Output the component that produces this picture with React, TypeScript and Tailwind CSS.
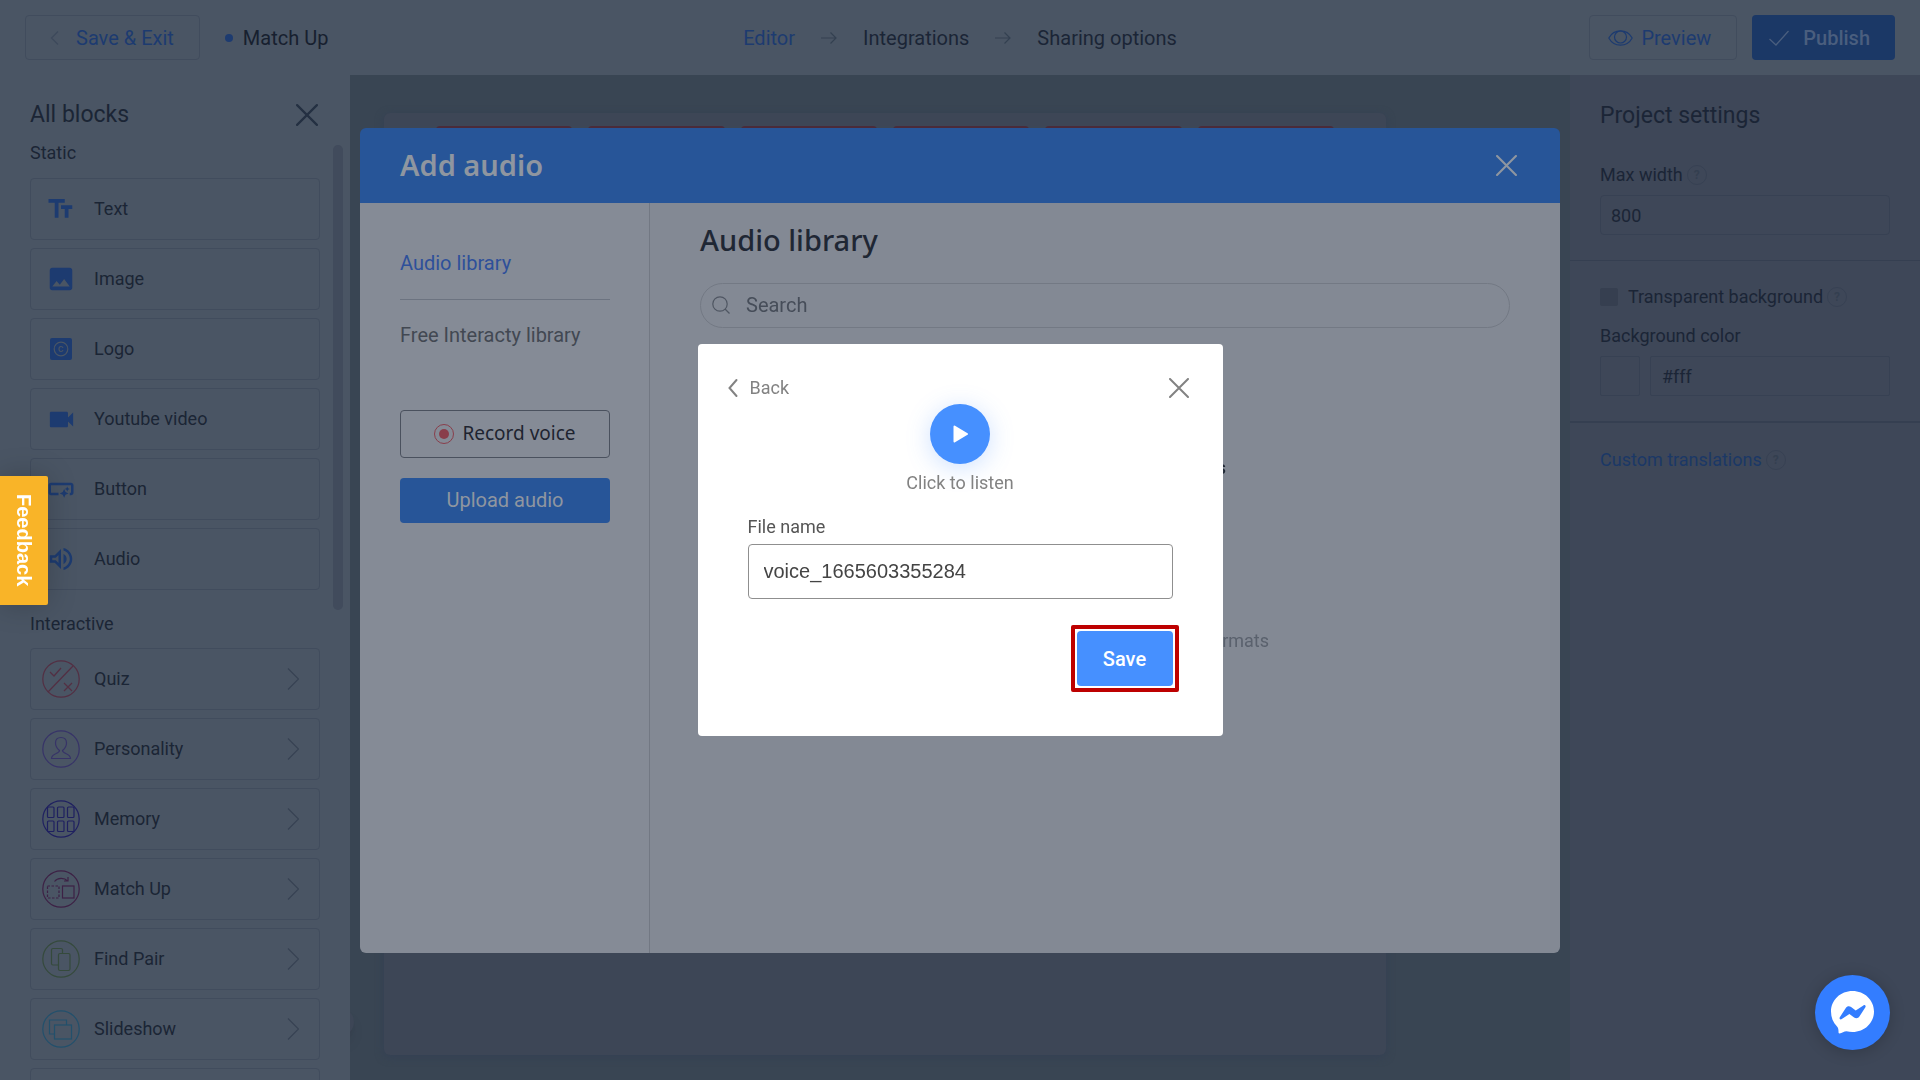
import React, { useState } from 'react';
import { MdFormatSize, MdImage, MdOutlineSmartButton, MdOutlineVolumeUp, MdVideocam } from 'react-icons/md';

const CloseIcon = ({ size = 20, width = 2 }: { size?: number; width?: number }) => (
    <svg width={size} height={size} viewBox="0 0 20 20" fill="none" stroke="currentColor" strokeWidth={width} strokeLinecap="round">
        <path d="M1 1l18 18M19 1L1 19" />
    </svg>
);

const ArrowRight = () => (
    <svg width="16" height="16" viewBox="0 0 16 16" fill="none" stroke="#344151" strokeWidth="1.2">
        <path d="M0 8h15M9.5 2.5L15 8l-5.5 5.5" />
    </svg>
);

const ChevronRight = () => (
    <svg width="12" height="22" viewBox="0 0 12 22" fill="none" stroke="#374253" strokeWidth="1.2">
        <path d="M1 0.5L11.5 11 1 21.5" />
    </svg>
);

const LogoIcon = () => (
    <svg width="22" height="22" viewBox="0 0 22 22" fill="none">
        <rect width="22" height="22" rx="2" fill="currentColor" />
        <circle cx="11" cy="11" r="6.8" stroke="#4a5564" strokeWidth="1.2" />
        <path d="M13 10c-.2-.9-1-1.500-2-1.500-1.300 0-2 1-2 2.500s.7 2.500 2 2.500c1 0 1.800-.6 2-1.500" stroke="#4a5564" strokeWidth="1.1" />
    </svg>
);

const staticBlocks = [
    { name: 'Text', icon: <MdFormatSize size={30} className="-scale-x-100" /> },
    { name: 'Image', icon: <MdImage size={30} /> },
    { name: 'Logo', icon: <LogoIcon /> },
    { name: 'Youtube video', icon: <MdVideocam size={31} /> },
    { name: 'Button', icon: <MdOutlineSmartButton size={30} /> },
    { name: 'Audio', icon: <MdOutlineVolumeUp size={30} /> },
];

const interactiveBlocks = [
    {
        name: 'Quiz',
        color: 'text-[#532f43]',
        icon: <path d="M6 32L31 6M8 12l4 4 7-8M22 23l8 8M30 23l-8 8" />,
    },
    {
        name: 'Personality',
        color: 'text-[#373368]',
        icon: <path d="M17.5 20.500C15 18.500 13.500 16 13.500 13c0-3.500 2-5.500 5.500-5.500s5.500 2 5.500 5.500c0 3-1.500 5.500-4 7.500 0 3.500 8 2.500 8 8h-19c0-5.500 8-4.500 8-8z" />,
    },
    {
        name: 'Memory',
        color: 'text-[#1f2060]',
        icon: (
            <>
                <rect x="5.5" y="7" width="6.5" height="10.5" rx="1" />
                <rect x="15.5" y="7" width="6.5" height="10.5" rx="1" />
                <rect x="25.5" y="7" width="6.5" height="10.5" rx="1" />
                <rect x="5.5" y="21" width="6.5" height="10.5" rx="1" />
                <rect x="15.5" y="21" width="6.5" height="10.5" rx="1" />
                <rect x="25.5" y="21" width="6.5" height="10.5" rx="1" />
            </>
        ),
    },
    {
        name: 'Match Up',
        color: 'text-[#3d2145]',
        icon: (
            <>
                <rect x="5.5" y="16" width="11.5" height="12" strokeDasharray="2.5 1.5" />
                <rect x="20.5" y="16" width="11.5" height="12" />
                <path d="M12.5 11.500c3-4 10-4 13-.5M26 7v4h-4" />
            </>
        ),
    },
    {
        name: 'Find Pair',
        color: 'text-[#354a3c]',
        icon: (
            <>
                <path d="M16.500 25H11c-1 0-1.500-.5-1.500-1.500V10c0-1 .5-1.500 1.500-1.500h8c1 0 1.500.5 1.500 1.500v3.500" />
                <rect x="16.500" y="13.5" width="11.5" height="17" rx="1.5" />
            </>
        ),
    },
    {
        name: 'Slideshow',
        color: 'text-[#22506c]',
        icon: (
            <>
                <path d="M12.500 24H7.500V10h17v5" />
                <rect x="12.5" y="15" width="17" height="14" />
            </>
        ),
    },
];

const Help = () => (
    <span className="flex h-5 w-5 items-center justify-center rounded-full border border-[#374153] text-xs font-bold text-[#343f50]">?</span>
);

const Header = () => (
    <header className="flex h-[75px] shrink-0 items-center bg-[#4a5564] px-[25px] text-xl text-[#17202f]">
        <div className="flex flex-1 items-center">
            <button className="flex h-[45px] items-center gap-[17px] rounded border border-[#414c5d] pr-[25px] pl-6 text-[#1d3b70]">
                <svg width="9" height="14" viewBox="0 0 9 14" fill="none" stroke="#3d495b" strokeWidth="1.2">
                    <path d="M8 .5L1.5 7 8 13.5" />
                </svg>
                Save &amp; Exit
            </button>
            <span className="mr-2.5 ml-[25px] h-2 w-2 rounded-full bg-[#1d3b70]" />
            <h1>Match Up</h1>
        </div>
        <nav className="flex items-center gap-[26px] text-[#1b2536]">
            <a href="#editor" className="text-[#1d3b70]">Editor</a>
            <ArrowRight />
            <a href="#integrations">Integrations</a>
            <ArrowRight />
            <a href="#sharing">Sharing options</a>
        </nav>
        <div className="flex flex-1 justify-end gap-[15px]">
            <button className="flex h-[45px] items-center gap-2 rounded border border-[#414c5d] pr-[25px] pl-[18px] text-[#1d3b70]">
                <svg width="25" height="18" viewBox="0 0 25 18" fill="none" stroke="currentColor" strokeWidth="1.2">
                    <path d="M.8 9C6-.5 19-.5 24.200 9 19 18.500 6 18.500.8 9z" />
                    <circle cx="12.5" cy="8" r="6" />
                </svg>
                Preview
            </button>
            <button className="flex h-[45px] items-center gap-[14px] rounded bg-[#1b3866] pr-[25px] pl-[17px] font-medium text-[#4a5e7e]">
                <svg width="20" height="16" viewBox="0 0 20 16" fill="none" stroke="currentColor" strokeWidth="1.3">
                    <path d="M.5 9L7 15 19.500 1" />
                </svg>
                Publish
            </button>
        </div>
    </header>
);

const Sidebar = () => (
    <aside className="relative z-10 flex w-[350px] shrink-0 flex-col bg-[#4a5564] pt-6 text-lg text-[#1b2535]">
        <div className="flex h-8 shrink-0 items-center justify-between pr-8 pl-[30px]">
            <h2 className="text-[23px]">All blocks</h2>
            <button aria-label="Close blocks" className="text-[#243042]">
                <CloseIcon size={22} />
            </button>
        </div>
        <div className="mt-2.5 flex min-h-0 flex-1 pr-[7px] pl-[30px]">
            <div className="flex-1 overflow-hidden">
                <h3 className="h-[37px] leading-6">Static</h3>
                <ul className="flex flex-col gap-2">
                    {staticBlocks.map((b) => (
                        <li key={b.name}>
                            <button className="flex h-[62px] w-full items-center gap-[17px] rounded border border-[#414c5d] pl-[14px]">
                                <span className="flex w-8 justify-center text-[#1d3b70]">{b.icon}</span>
                                {b.name}
                            </button>
                        </li>
                    ))}
                </ul>
                <h3 className="flex h-[58px] items-center pt-2.5">Interactive</h3>
                <ul className="flex flex-col gap-2">
                    {interactiveBlocks.map((b) => (
                        <li key={b.name}>
                            <button className="flex h-[62px] w-full items-center gap-[14px] rounded border border-[#414c5d] pr-5 pl-[11px]">
                                <svg width="38" height="38" viewBox="0 0 38 38" fill="none" stroke="currentColor" strokeWidth="1.2" className={b.color}>
                                    <circle cx="19" cy="19" r="18.2" />
                                    {b.icon}
                                </svg>
                                {b.name}
                                <span className="ml-auto"><ChevronRight /></span>
                            </button>
                        </li>
                    ))}
                    <li className="h-[62px] rounded border border-[#414c5d]" />
                </ul>
            </div>
            <div className="mt-1 ml-[13px] h-[465px] w-2.5 rounded-full bg-[#414b5c]" />
        </div>
    </aside>
);

const Canvas = () => (
    <main className="relative flex min-w-0 flex-1 bg-[#394553] pt-[38px] pr-[25px] pb-[25px] pl-[34px]">
        <div className="absolute bottom-11 -left-6 h-7 w-7 rounded-full bg-[#3d4656] shadow-lg" />
        <div className="flex w-full max-w-[1002px] items-start gap-4 rounded-md bg-[#3d4656] px-[52px] pt-[13px] shadow-[0_2px_8px_#344054]">
            {[1, 2, 3, 4, 5, 6].map((n) => (
                <div key={n} className="h-40 flex-1 rounded bg-[#4a2b3a]" />
            ))}
        </div>
    </main>
);

const Settings = () => (
    <aside className="flex w-[350px] shrink-0 flex-col bg-[#3e4758] pt-[25px] text-lg text-[#1b2536]">
        <h2 className="mx-[30px] text-[23px] leading-8">Project settings</h2>
        <div className="border-b border-[#353f51] px-[30px] pt-[31px] pb-[25px]">
            <div className="flex h-6 items-center gap-1">
                <label htmlFor="max-width">Max width</label>
                <Help />
            </div>
            <input id="max-width" defaultValue="800" className="mt-2 h-10 w-full rounded border border-[#374153] px-2.5 outline-none" />
        </div>
        <div className="border-b-2 border-[#353f51] px-[30px] pt-6 pb-[25px]">
            <div className="flex h-6 items-center gap-1">
                <input id="transparent" type="checkbox" className="mr-1.5 h-[18px] w-[18px] appearance-none rounded-xs bg-[#363f50]" />
                <label htmlFor="transparent">Transparent background</label>
                <Help />
            </div>
            <label htmlFor="bg-color" className="mt-[15px] block h-6 leading-6">Background color</label>
            <div className="mt-2 flex gap-2.5">
                <button aria-label="Pick color" className="h-10 w-10 rounded-xs border border-[#374153]" />
                <input id="bg-color" defaultValue="#fff" className="h-10 min-w-0 flex-1 rounded-xs border border-[#374153] px-[11px] outline-none" />
            </div>
        </div>
        <div className="mx-[30px] mt-[25px] flex h-6 items-center gap-1">
            <a href="#translations" className="text-[#1b3866]">Custom translations</a>
            <Help />
        </div>
    </aside>
);

const AudioLibrary = () => (
    <section className="flex h-[825px] w-[1200px] max-w-full flex-col overflow-hidden rounded-md">
        <div className="flex h-[75px] shrink-0 items-center justify-between bg-[#275598] pr-[43px] pl-10 text-[#8f96a0]">
            <h2 className="font-['Noto_Sans',sans-serif] text-[29px] font-semibold">Add audio</h2>
            <button aria-label="Close audio library">
                <CloseIcon size={21} />
            </button>
        </div>
        <div className="flex flex-1">
            <div className="flex w-[290px] flex-col border-r border-[#727883] bg-[#858b96] pt-12 pr-[39px] pl-10 text-xl">
                <a href="#library" className="border-b border-[#6c7380] pb-6 leading-6 text-[#2e509a]">Audio library</a>
                <a href="#free" className="mt-[23px] leading-6 text-[#424852]">Free Interacty library</a>
                <button className="mt-[63px] flex h-12 items-center justify-center gap-2 rounded border border-[#4a515e] font-['Noto_Sans',sans-serif] text-[19px] text-[#1e2430]">
                    <span className="flex h-5 w-5 items-center justify-center rounded-full border border-[#893e4b]">
                        <span className="h-2.5 w-2.5 rounded-full bg-[#893e4b]" />
                    </span>
                    Record voice
                </button>
                <button className="mt-5 h-[45px] rounded bg-[#275598] text-[#8f96a0]">Upload audio</button>
            </div>
            <div className="flex-1 bg-[#838994] px-[50px] pt-[17px]">
                <h3 className="font-['Noto_Sans',sans-serif] text-[29px] leading-10 font-medium text-[#1f2734]">Audio library</h3>
                <div className="mt-[23px] flex h-[45px] items-center gap-4 rounded-full border border-[#737984] px-[11px]">
                    <svg width="18" height="18" viewBox="0 0 18 18" fill="none" stroke="#4f5662" strokeWidth="1.2">
                        <circle cx="8" cy="8" r="7.2" />
                        <path d="M13 13l4.5 4.5" />
                    </svg>
                    <input aria-label="Search" placeholder="Search" className="flex-1 text-xl outline-none placeholder:text-[#464d59]" />
                </div>
                <div className="mx-auto flex w-[328px] flex-col items-end pt-[126px]">
                    <p className="mr-[43px] text-lg font-medium text-[#1f2734]">s</p>
                    <p className="mt-[145px] text-lg text-[#5a616d]">rmats</p>
                </div>
            </div>
        </div>
    </section>
);

const SaveVoice = () => {
    const [name, setName] = useState('voice_1665603355284');

    return (
        <section className="flex h-[392px] w-[525px] max-w-full flex-col rounded bg-white px-[30px] pt-7 text-lg">
            <div className="flex h-8 items-center justify-between text-[#828282]">
                <button className="flex items-center gap-3">
                    <svg width="10" height="20" viewBox="0 0 10 20" fill="none" stroke="currentColor" strokeWidth="2" strokeLinecap="round">
                        <path d="M8.500 2L1.500 10l7 8" />
                    </svg>
                    Back
                </button>
                <button aria-label="Close" className="mr-1">
                    <CloseIcon />
                </button>
            </div>
            <div className="flex flex-col items-center text-[#828282]">
                <button aria-label="Play" className="flex h-[60px] w-[60px] items-center justify-center rounded-full bg-[#4690ff] shadow-[0_4px_24px_#4690ff44]">
                    <svg width="15" height="18" viewBox="0 0 15 18" fill="#fff" stroke="#fff" strokeWidth="2" strokeLinejoin="round">
                        <path d="M1.500 1.500L14 9 1.500 16.500z" />
                    </svg>
                </button>
                <p className="mt-[5px]">Click to listen</p>
            </div>
            <div className="mt-4 px-5">
                <label htmlFor="file-name" className="block text-[#555]">File name</label>
                <input
                    id="file-name"
                    value={name}
                    onChange={(e) => setName(e.target.value)}
                    className="mt-[3px] h-[55px] w-full rounded border border-[#8f8f8f] px-[15px] font-['Liberation_Sans',sans-serif] text-xl text-[#444] outline-none"
                />
            </div>
            <div className="mt-[26px] mr-3.5 self-end rounded-xs border-4 border-[#bd0000] p-0.5">
                <button className="h-[55px] w-24 rounded bg-[#4690ff] text-xl font-medium text-white">Save</button>
            </div>
        </section>
    );
};

export default function App() {
    return (
        <div className="flex h-screen flex-col overflow-hidden font-[Roboto,sans-serif]">
            <Header />
            <div className="flex min-h-0 flex-1">
                <Sidebar />
                <Canvas />
                <Settings />
            </div>
            <div className="fixed inset-0 z-20 flex items-center justify-center">
                <AudioLibrary />
            </div>
            <div className="fixed inset-0 z-30 flex items-center justify-center">
                <SaveVoice />
            </div>
            <button className="fixed top-[476px] left-0 z-40 flex h-[129px] w-12 items-center justify-center rounded-r-xs bg-[#f9b428] font-['Liberation_Sans',sans-serif] text-xl font-bold text-white shadow-[0_0_30px_#0003] [writing-mode:vertical-rl]">
                Feedback
            </button>
            <button aria-label="Open chat" className="fixed right-[30px] bottom-[30px] z-40 flex h-[75px] w-[75px] items-center justify-center rounded-full bg-[#337dff] shadow-[0_2px_16px_#0003]">
                <svg width="43" height="43" viewBox="0 0 43 43">
                    <path d="M21.500 0C33.500 0 43 9 43 20.500S33.500 41 21.500 41c-2 0-4-.3-6-.8-2.500 0-4.500 2-7 2.300-1 0-1-1-1-2 0-2-.3-3.600-1.500-5C2 31.500 0 26.500 0 20.500 0 9 9.500 0 21.500 0z" fill="#fff" />
                    <path d="M8.800 26.300l6-9.300c1.200-1.900 3.600-2.200 5.300-.9l4.600 3.500 7.700-5.200c1.400-1 2.900.3 2 1.900l-6 9.200c-1.200 1.900-3.600 2.200-5.300.9l-4.700-3.500-7.600 5.200c-1.400 1-2.900-.3-2-1.800z" fill="#337dff" />
                </svg>
            </button>
        </div>
    );
}
